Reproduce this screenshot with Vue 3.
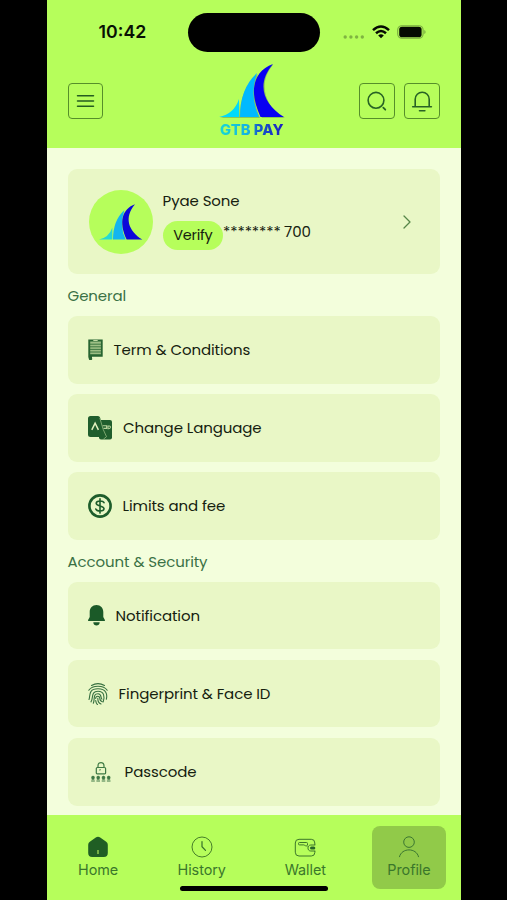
<script setup>
const groups = [
  {
    title: 'General',
    items: [
      { id: 'terms', label: 'Term & Conditions' },
      { id: 'language', label: 'Change Language' },
      { id: 'fees', label: 'Limits and fee' },
    ],
  },
  {
    title: 'Account & Security',
    items: [
      { id: 'notification', label: 'Notification' },
      { id: 'fingerprint', label: 'Fingerprint & Face ID' },
      { id: 'passcode', label: 'Passcode' },
    ],
  },
]
const tabs = ['Home', 'History', 'Wallet', 'Profile']
</script>

<template>
  <div class="stage">
    <div class="phone">
      <header class="top">
        <div class="status">
          <span class="time">10:42</span>
          <span class="island"></span>
          <span class="signals">
            <svg class="cell" viewBox="0 0 22 6"><g fill="#7fb441"><circle cx="2.2" cy="3" r="1.7" /><circle cx="7.9" cy="3" r="1.7" /><circle cx="13.6" cy="3" r="1.7" /><circle cx="19.3" cy="3" r="1.7" /></g></svg>
            <svg class="wifi" viewBox="0 0 18 14"><path d="M1 5.2Q9-2.2 17 5.2M4 8.3Q9 3.8 14 8.3" fill="none" stroke="#050b02" stroke-width="2.5" /><path d="M9 13.3 6.2 10.5Q9 8.2 11.8 10.5Z" fill="#050b02" /></svg>
            <svg class="battery" viewBox="0 0 29 14"><rect x=".7" y=".7" width="25.4" height="12.6" rx="4.2" fill="none" stroke="#79aa40" stroke-width="1.1" /><rect x="2.2" y="1.8" width="22.4" height="10.4" rx="2.8" fill="#050b02" /><path d="M27.3 5v4q1.3-.5 1.3-2t-1.3-2" fill="#79aa40" /></svg>
          </span>
        </div>
        <div class="bar">
          <button class="square" aria-label="Menu">
            <svg viewBox="0 0 36 36"><path d="M9.500 12.700h16M9.500 18h16M9.500 23.200h16" stroke="#245c20" stroke-width="1.500" stroke-linecap="round" /></svg>
          </button>
          <div class="brand">
            <svg class="mark" viewBox="0 0 66 55">
              <path class="shade" d="M1 54Q16 51 20 37L21 54ZM21 54Q20 26 39 10Q31 31 41 54ZM54 1C36 7 32 23 37 40L43 54H66C45 43 39 18 54 1Z" />
              <path d="M0 53Q15 50 20 35V53Z" fill="#00dafa" />
              <path d="M21 53Q21 24 38 9Q30 32 40 53Z" fill="#00b9ff" />
              <path d="M54 0C35 7 29 26 41.500 53H65C44 40 37 20 54 0Z" fill="#0800f2" />
            </svg>
            <strong class="name">GTB PAY</strong>
          </div>
          <div class="actions">
            <button class="square" aria-label="Search">
              <svg viewBox="0 0 36 36"><circle cx="17" cy="17.300" r="7.900" fill="none" stroke="#286325" stroke-width="1.600" /><path d="m24.300 24.700 2 2" stroke="#286325" stroke-width="1.800" stroke-linecap="round" /></svg>
            </button>
            <button class="square" aria-label="Notifications">
              <svg viewBox="0 0 36 36"><path d="M8.700 23.800h18.700M11.200 23.800v-7.600a7 7 0 0 1 14 0v7.600M15.500 27.700h5.400" fill="none" stroke="#286325" stroke-width="1.600" stroke-linecap="round" /></svg>
            </button>
          </div>
        </div>
      </header>

      <main class="content">
        <section class="card account">
          <div class="avatar">
            <svg viewBox="0 0 66 55"><path d="M0 53Q15 50 20 35V53Z" fill="#25d9d3" /><path d="M21 53Q21 24 38 9Q30 32 40 53Z" fill="#13b5ef" /><path d="M54 0C35 7 29 26 41.500 53H65C44 40 37 20 54 0Z" fill="#0b08d9" /></svg>
          </div>
          <div class="who">
            <span class="person">Pyae Sone</span>
            <div class="number"><span class="verify">Verify</span><span class="stars">********</span><span class="digits">700</span></div>
          </div>
          <svg class="chevron" viewBox="0 0 8 14"><path d="m1 1 6 6-6 6" fill="none" stroke="#568648" stroke-width="1.300" stroke-linecap="round" stroke-linejoin="round" /></svg>
        </section>

        <section v-for="group in groups" :key="group.title" class="group">
          <h2 class="title">{{ group.title }}</h2>
          <div class="list">
            <div v-for="item in group.items" :key="item.id" :class="['card', 'row', item.id]">
              <svg v-if="item.id === 'terms'" class="icon" viewBox="0 0 15 21">
                <path d="M.3.500h14.400v17.300H4V19a1.500 1.500 0 0 1-3 1.500L.3 18Z" fill="#276431" /><path d="M2.200 2.500h10.700v13.200H2.200z" fill="#9dbf85" /><path d="M2 5.200h11M2 7.800h11M2 10.400h11M2 13h11M2 15.600h11" stroke="#34703a" stroke-width=".9" /><path d="M5.300 1.500h4.400" stroke="#bfd9a1" stroke-width="1" />
              </svg>
              <svg v-else-if="item.id === 'language'" class="icon" viewBox="0 0 24 24">
                <rect x="11" y="4" width="13" height="19.500" rx="2" fill="#205e2d" />
                <path d="M2.500 0H10q1.600 0 2 1.500L18.500 21H2.500Q0 21 0 18.500v-16Q0 0 2.500 0" fill="#205e2d" />
                <path d="m11.800 2 3.300 11.200 3.400 7.500-3.100 2.500" fill="none" stroke="#a5c58d" stroke-width=".7" />
                <path d="m3.800 13.800 3.300-6.600 3.300 6.600" fill="none" stroke="#e1f0be" stroke-width="1.500" /><path d="M14.600 9.800h4v3.300M20 13.300V10h1.300q1.400.2 1 1.700-.3 1-1.700 1M15.500 12.400h3" fill="none" stroke="#b7d29b" stroke-width="1.100" />
              </svg>
              <svg v-else-if="item.id === 'fees'" class="icon" viewBox="0 0 24 24">
                <circle cx="12" cy="12" r="10.600" fill="none" stroke="#1d5d2b" stroke-width="2.600" /><path d="M16 8.700Q15.200 7 12 7 8.300 7 8.200 9.300c0 3.100 7.800 2.100 7.800 5.300Q16 17 12 17q-3.500 0-4.200-2M12 4.900v14.200" fill="none" stroke="#1d5d2b" stroke-width="1.600" stroke-linecap="round" />
              </svg>
              <svg v-else-if="item.id === 'notification'" class="icon" viewBox="0 0 17 21">
                <path d="M8.500 0c4.100 0 6.800 3 6.800 7v5l1.600 3v1H.100v-1l1.600-3V7c0-4 2.700-7 6.800-7M5.300 17.200h6.400c0 4.400-6.400 4.400-6.400 0" fill="#1b5a28" />
              </svg>
              <svg v-else-if="item.id === 'fingerprint'" class="icon" viewBox="0 0 20 22">
                <g fill="none" stroke="#377040" stroke-width="1.100" stroke-linecap="round">
                  <path d="M3.500 2.400Q10-1.200 16.500 2.400M.8 7.200Q3.500 3.200 10 3.200t9.200 4" />
                  <path d="M1 16.500c1.500-3-1.300-10.700 9-10.700 8.300 0 9.600 5.500 8.300 10.500" />
                  <path d="M3 18.900c2.700-4-.5-10.600 7-10.600 6.200 0 6.900 5.300 5.200 10.600" />
                  <path d="M5.300 20.300c1.900-4.500-.7-9.500 4.700-9.500 4 0 2.300 4 3.900 5.300" />
                  <path d="M7.700 15.500c-.2-2.800 4-3 4.100-.2.100 2.200.8 3.300 2.600 3.400M9.800 15.200c0 3 .8 5 3.200 5.800M7.700 17.600c.2 1.700.8 3 1.700 3.900" />
                </g>
              </svg>
              <svg v-else class="icon" viewBox="0 0 20 20">
                <path d="M5.300 11V6.500q0-1 1-1h7.300q1 0 1 1V11q0 .8-.8.8H6.100q-.8 0-.8-.8M7 5.500V3.900Q7 .6 10 .6t3 3.300v1.600M8.500 8.300l1-1" fill="none" stroke="#3d7943" stroke-width="1.200" />
                <path d="M.2 15.800h3.600M5.400 15.800H9M10.700 15.800h3.600M15.900 15.800h3.600M2 13.800v4M7.200 13.800v4M12.500 13.800v4M17.700 13.800v4M.7 14.300l2.600 3M3.300 14.300l-2.600 3M5.900 14.300l2.600 3M8.500 14.300l-2.600 3M11.200 14.300l2.600 3M13.800 14.300l-2.600 3M16.400 14.300l2.600 3M19 14.300l-2.600 3M.2 19h3.600M5.400 19H9M10.700 19h3.600M15.900 19h3.600" stroke="#3f7945" stroke-width="1.050" />
              </svg>
              <span class="label">{{ item.label }}</span>
            </div>
          </div>
        </section>
      </main>

      <nav class="tabs">
        <div v-for="tab in tabs" :key="tab" :class="['tab', { active: tab === 'Profile' }]">
          <svg v-if="tab === 'Home'" viewBox="0 0 22 22"><path d="M8.800 1.500q2.200-1.300 4.400 0l6 4.200q1.600 1.100 1.600 3V17q0 4-4 4H5.200q-4 0-4-4V8.700q0-1.900 1.600-3Z" fill="#205e24" /><path d="M11 14v4" stroke="#a3da58" stroke-width="1.300" /></svg>
          <svg v-else-if="tab === 'History'" viewBox="0 0 22 22"><circle cx="11" cy="11" r="10" fill="none" stroke="#467e29" stroke-width="1" /><path d="M11 5.500v5.200l3.500 3.700" fill="none" stroke="#35702a" stroke-width="1.200" stroke-linecap="round" /></svg>
          <svg v-else-if="tab === 'Wallet'" viewBox="0 0 22 22"><path d="M20.800 9V7q0-3.700-3.500-3.700H5Q1.300 3.300 1.300 7v9.200Q1.300 20 5 20h12.300q3.500 0 3.500-3.500V15M21.300 9h-4.500c-3.700 0-3.900 6 0 6h4.500M13.500 9V7.500q0-1-1-1H5.500q-1 0-1 1V8q0 .9 1 .9h4.300q1 0 1.600 1h2.400" fill="none" stroke="#3c772a" stroke-width="1" /><rect x="16" y="10.500" width="5.300" height="3" rx="1.500" fill="#286628" /></svg>
          <svg v-else viewBox="0 0 22 22"><circle cx="11" cy="6.100" r="5.300" fill="none" stroke="#3b7631" stroke-width="1" /><path d="M1.500 20.700c2-9.200 17-9.200 19 0" fill="none" stroke="#3b7631" stroke-width="1" stroke-linecap="round" /></svg>
          <span>{{ tab }}</span>
        </div>
        <div class="indicator"></div>
      </nav>
    </div>
  </div>
</template>

<style>
body { background: #000; overflow: hidden; }
</style>

<style scoped>
* { box-sizing: border-box; }
svg { display: block; flex: none; }
.stage { width: 507px; height: 900px; padding-left: 46.600px; background: #000; font-family: Poppins, Inter, sans-serif; color: #15210f; }
.phone { width: 414.400px; height: 900px; display: flex; flex-direction: column; background: #f3fedc; }
.top { height: 148px; flex: none; background: #b6fe5b; }
.status { height: 64px; display: grid; grid-template-columns: 141px 132.500px 1fr; align-items: center; }
.time { padding-left: 52px; font: 600 17.700px/20px Inter, sans-serif; letter-spacing: 0; color: #081004; }
.island { height: 39px; background: #000; border-radius: 20px; }
.signals { display: flex; align-items: center; padding-left: 22.500px; }
.cell { width: 22px; height: 6px; margin-top: 9px; }
.wifi { width: 18px; height: 14px; margin-left: 7px; }
.battery { width: 29px; height: 14px; margin-left: 7px; }
.bar { height: 84px; padding: 0 21px; display: grid; grid-template-columns: 1fr 66px 1fr; align-items: start; }
.square { width: 35.600px; height: 36px; margin: 18.500px 0 0; padding: 0; border: 1px solid #568f2a; border-radius: 4px; background: transparent; }
.square svg { width: 36px; height: 36px; margin: -1px; }
.actions { display: flex; justify-content: flex-end; gap: 9.500px; }
.brand { display: flex; flex-direction: column; align-items: center; margin: 0 1.500px 0 -1.500px; }
.mark { width: 66px; height: 55px; }
.shade { fill: #6a9b50; opacity: .55; }
.name { margin: 3px 0 0 -1px; font: 800 14.700px/17px Inter, sans-serif; letter-spacing: .1px; white-space: nowrap; color: transparent; background: linear-gradient(90deg, #17d8d4, #13afe4 45%, #155bc9 60%, #1c1cc2); background-clip: text; }
.content { flex: 1; min-height: 0; padding: 21px 21px 0; overflow: hidden; }
.card { background: #e9f7c6; border-radius: 9px; }
.account { height: 105px; display: flex; align-items: center; padding: 0 29px 0 21px; }
.avatar { width: 64px; height: 64px; border-radius: 50%; background: #b6fe5b; display: flex; justify-content: center; align-items: center; }
.avatar svg { width: 44px; height: 37px; margin-top: 1px; }
.who { margin-left: 10px; flex: 1; height: 65px; }
.person { display: block; font-size: 15px; line-height: 24px; letter-spacing: -.1px; }
.number { display: flex; align-items: flex-start; margin-top: 8px; font-size: 15px; line-height: 22px; }
.verify { width: 60.500px; height: 29px; text-align: center; line-height: 29px; border-radius: 15px; background: #b6fe5b; font-size: 14.500px; letter-spacing: -.25px; }
.stars { width: 61px; letter-spacing: -.1px; }
.digits { font-size: 15px; letter-spacing: -.1px; }
.chevron { width: 8px; height: 14px; }
.title { height: 42px; margin: 0; font-size: 15px; line-height: 43px; font-weight: 400; letter-spacing: -.1px; color: #3a7145; }
.list { display: grid; grid-auto-rows: 67.600px; gap: 10.500px; }
.row { display: flex; align-items: center; padding-left: 20.500px; }
.label { font-size: 15px; line-height: 24px; letter-spacing: -.1px; white-space: nowrap; }
.icon { margin-right: 10.500px; }
.terms .icon { width: 15px; height: 21px; }
.language .icon { width: 24px; height: 24px; margin-right: 11px; }
.fees .icon { width: 24px; height: 24px; }
.notification .icon { width: 17px; height: 21px; }
.fingerprint .icon { width: 20px; height: 22px; }
.passcode .icon { width: 20px; height: 20px; margin: 0 13.500px 0 3px; }
.tabs { position: relative; height: 85px; flex: none; padding: 11px 15px 11px 14.500px; display: grid; grid-template-columns: repeat(4, 74px); justify-content: space-between; background: #b6fe5b; }
.tab { height: 63px; padding-top: 10px; display: flex; flex-direction: column; align-items: center; border-radius: 8px; color: #3b772b; font: 400 14.400px/20px Inter, sans-serif; letter-spacing: -.05px; }
.tab svg { width: 22px; height: 22px; margin-bottom: 2px; }
.tab.active { background: #91ca49; }
.indicator { position: absolute; left: 133.500px; bottom: 9px; width: 148px; height: 5px; border-radius: 3px; background: #000; }
</style>
